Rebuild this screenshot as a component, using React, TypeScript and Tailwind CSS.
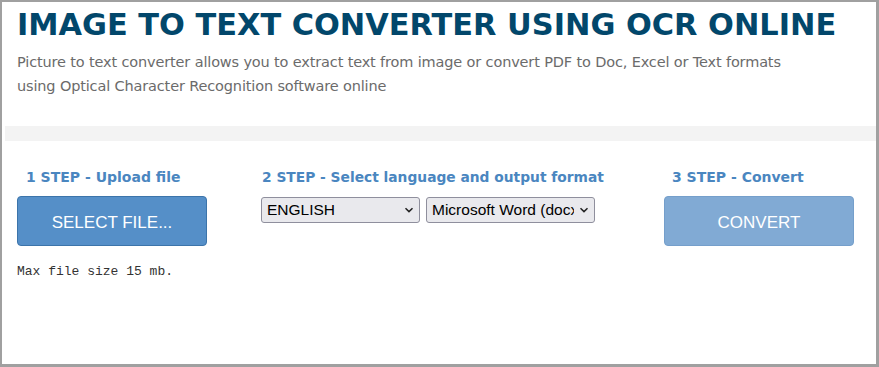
import React from 'react';

const Chevron: React.FC = () => (
    <svg width="10" height="6" viewBox="0 0 10 6" className="shrink-0">
        <path d="M1.5 1.2 L5 4.6 L8.5 1.2" fill="none" stroke="#222" strokeWidth="1.5" />
    </svg>
);

const FakeSelect: React.FC<{ label: string; width: string }> = ({ label, width }) => (
    <div
        className={`${width} h-[26px] flex items-center gap-[5px] pl-[5px] pr-[5px] bg-[#e9e9ed] border border-[#8f8f9d] rounded-[3px] text-[15.5px] text-black whitespace-nowrap font-['Liberation_Sans',Arial,sans-serif]`}
    >
        <span className="flex-1 overflow-hidden">{label}</span>
        <Chevron />
    </div>
);

const App: React.FC = () => {
    return (
        <div className="w-[879px] h-[367px] bg-white border-[#a0a0a0] border-l-2 border-t-2 border-r-[3px] border-b-[3px] font-['DejaVu_Sans',Verdana,sans-serif]">
            <header className="pl-[15px] pt-[3px]">
                <h1 className="text-[30.4px] leading-[40px] font-bold text-[#02476b] whitespace-nowrap">
                    IMAGE TO TEXT CONVERTER USING OCR ONLINE
                </h1>
                <p className="mt-[5px] text-[14.5px] leading-[24px] text-[#6b6b6b] tracking-[-0.15px] whitespace-nowrap">
                    Picture to text converter allows you to extract text from image or convert PDF to Doc, Excel or Text formats
                    <br />
                    using Optical Character Recognition software online
                </p>
            </header>

            <div className="ml-[3px] mt-[28px] h-[15px] bg-[#f3f3f3]"></div>

            <section className="flex pl-[15px] pt-[27px]">
                <div className="w-[244px] shrink-0">
                    <h2 className="pl-[9px] text-[14px] leading-[18px] font-bold text-[#4a86c0]">1 STEP - Upload file</h2>
                    <button className="mt-[10px] w-[190px] h-[50px] pt-[3px] bg-[#558fc8] border border-[#3c74aa] rounded-[4px] text-white text-[17px] font-['Liberation_Sans',Arial,sans-serif]">
                        SELECT FILE...
                    </button>
                    <p className="mt-[18px] text-[13px] leading-[16px] text-[#333] font-['Liberation_Mono','Courier_New',monospace]">
                        Max file size 15 mb.
                    </p>
                </div>

                <div className="w-[403px] shrink-0">
                    <h2 className="pl-[1px] text-[13.8px] leading-[18px] font-bold text-[#4a86c0] whitespace-nowrap">
                        2 STEP - Select language and output format
                    </h2>
                    <div className="mt-[11px] flex gap-[6px]">
                        <FakeSelect label="ENGLISH" width="w-[159px]" />
                        <FakeSelect label="Microsoft Word (docx)" width="w-[169px]" />
                    </div>
                </div>

                <div className="w-[190px] shrink-0">
                    <h2 className="pl-[8px] text-[14px] leading-[18px] font-bold text-[#4a86c0]">3 STEP - Convert</h2>
                    <button className="mt-[10px] w-[190px] h-[50px] pt-[3px] bg-[#81aad4] border border-[#759fcb] rounded-[4px] text-white text-[17px] font-['Liberation_Sans',Arial,sans-serif]">
                        CONVERT
                    </button>
                </div>
            </section>
        </div>
    );
};

export default App;
